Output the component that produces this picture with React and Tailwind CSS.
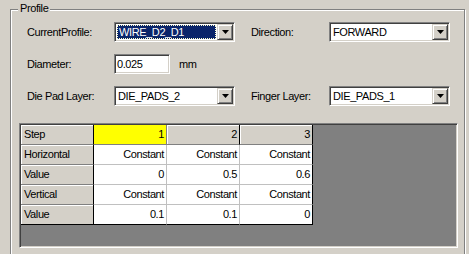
import React from 'react';

const sunken =
  'border border-t-[#808080] border-l-[#808080] border-b-white border-r-white shadow-[inset_1px_1px_0_#404040,inset_-1px_-1px_0_#d4d0c8] p-[1px]';

// bouton de liste déroulante (style Windows classique)
const DropButton = () => (
  <div className="w-[16px] h-[16px] shrink-0 bg-[#d4d0c8] border border-t-[#d4d0c8] border-l-[#d4d0c8] border-b-[#404040] border-r-[#404040] shadow-[inset_1px_1px_0_#fff,inset_-1px_-1px_0_#808080] flex items-center justify-center">
    <svg width="7" height="4" viewBox="0 0 7 4">
      <polygon points="0,0 7,0 3.5,4" fill="#000" />
    </svg>
  </div>
);

const Combo = ({ value, selected }) => (
  <div className={`w-[121px] h-[20px] flex bg-white ${sunken}`}>
    {selected ? (
      <div className="flex-1 p-[1px] flex">
        <div className="flex-1 bg-[#0a246a] border border-dotted border-[#ffffcc] text-white pl-[1px] flex items-center">
          {value}
        </div>
      </div>
    ) : (
      <div className="flex-1 pl-[2px] flex items-center">{value}</div>
    )}
    <DropButton />
  </div>
);

const rows = [
  ['Step', '1', '2', '3'],
  ['Horizontal', 'Constant', 'Constant', 'Constant'],
  ['Value', '0', '0.5', '0.6'],
  ['Vertical', 'Constant', 'Constant', 'Constant'],
  ['Value', '0.1', '0.1', '0'],
];

const cellClass = (r, c) => {
  const last = r === rows.length - 1;
  if (c === 0) {
    return `bg-[#d4d0c8] border-r border-r-black border-b ${last ? 'border-b-black' : 'border-b-[#808080]'} shadow-[inset_1px_1px_0_#fff] pl-[3px] justify-start`;
  }
  if (r === 0) {
    if (c === 1) return 'bg-[#ffff00] border-r border-r-[#808080] border-b border-b-[#808080] pr-[2px] justify-end';
    return 'bg-[#d4d0c8] border-r border-r-black border-b border-b-[#808080] shadow-[inset_1px_1px_0_#fff] pr-[2px] justify-end';
  }
  return `bg-white border-r ${c === 3 ? 'border-r-black' : 'border-r-[#c0c0c0]'} border-b ${last ? 'border-b-black' : 'border-b-[#c0c0c0]'} pr-[2px] justify-end`;
};

export default function App() {
  return (
    <div className="w-[469px] h-[254px] overflow-hidden bg-[#d4d0c8] pt-[9px] pl-[10px] font-['Liberation_Sans',Arial,sans-serif] text-[11px] leading-[13px] tracking-[-0.4px] text-black">
      <div className="relative w-[455px] h-[260px] border border-[#808080] shadow-[inset_1px_1px_0_#fff,1px_1px_0_#fff]">
        <span className="absolute left-[7px] top-[-8px] px-[2px] bg-[#d4d0c8]">Profile</span>

        <div className="pt-[12px] pl-[16px] flex flex-col gap-[12px]">
          <div className="flex items-center h-[20px]">
            <div className="w-[87px]">CurrentProfile:</div>
            <Combo value="WIRE_D2_D1" selected />
            <div className="w-[78px] ml-[16px]">Direction:</div>
            <Combo value="FORWARD" />
          </div>

          <div className="flex items-center h-[20px]">
            <div className="w-[87px]">Diameter:</div>
            <div className={`w-[56px] h-[20px] bg-white pl-[2px] flex items-center ${sunken}`}>0.025</div>
            <div className="ml-[9px]">mm</div>
          </div>

          <div className="flex items-center h-[20px]">
            <div className="w-[87px]">Die Pad Layer:</div>
            <Combo value="DIE_PADS_2" />
            <div className="w-[78px] ml-[16px]">Finger Layer:</div>
            <Combo value="DIE_PADS_1" />
          </div>
        </div>

        <div className={`ml-[8px] mt-[17px] w-[439px] h-[125px] bg-[#808080] ${sunken}`}>
          <div className="grid grid-cols-[73px_73px_73px_73px] w-[292px]">
            {rows.map((row, r) =>
              row.map((txt, c) => (
                <div key={`${r}-${c}`} className={`h-[20px] flex items-center ${cellClass(r, c)}`}>
                  {txt}
                </div>
              ))
            )}
          </div>
        </div>
      </div>
    </div>
  );
}
